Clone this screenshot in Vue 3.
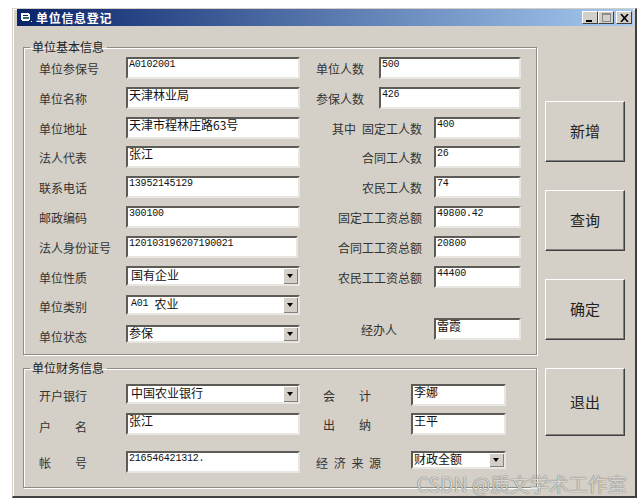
<script setup>
const leftRows = [
  { label: '单位参保号', value: 'A0102001', mono: true },
  { label: '单位名称', value: '天津林业局' },
  { label: '单位地址', value: '天津市程林庄路63号' },
  { label: '法人代表', value: '张江' },
  { label: '联系电话', value: '13952145129', mono: true },
  { label: '邮政编码', value: '300100', mono: true },
  { label: '法人身份证号', value: '120103196207190021', mono: true, cls: 'w172' },
  { label: '单位性质', value: '国有企业', select: true, cls: 'pad h20' },
  { label: '单位类别', prefix: 'A01', value: '农业', select: true, cls: 'pad h20' },
  { label: '单位状态', value: '参保', select: true, cls: 'h18' }
]
const rightRows = [
  { label: '单位人数', value: '500', wide: true },
  { label: '参保人数', value: '426', wide: true },
  { label: '其中\u2002固定工人数', value: '400' },
  { label: '合同工人数', value: '26' },
  { label: '农民工人数', value: '74' },
  { label: '固定工工资总额', value: '49800.42' },
  { label: '合同工工资总额', value: '20800' },
  { label: '农民工工资总额', value: '44400' }
]
const buttons = ['新增', '查询', '确定', '退出']
</script>

<template>
  <div class="window">
    <div class="titlebar">
      <svg class="appicon" width="12" height="10" viewBox="0 0 12 10">
        <path d="M0 0h8v1h1v6h-1v1H1V7H0z" fill="#fff" />
        <path d="M2 2h5v1H2z" fill="#0a246a" />
        <path d="M2 4h6v2H2z" fill="#2f6f6a" />
        <path d="M10 8h1v1h-1z" fill="#fff" />
      </svg>
      <span class="title">单位信息登记</span>
      <div class="caps">
        <span class="cap"><i class="min"></i></span>
        <span class="cap"><i class="max"></i></span>
        <span class="cap close">
          <svg width="9" height="8" viewBox="0 0 9 8"><path d="M1 0l7 8M8 0L1 8" stroke="#000" stroke-width="1.6" fill="none" /></svg>
        </span>
      </div>
    </div>

    <div class="body">
      <div class="groups">
        <fieldset class="group g1">
          <legend>单位基本信息</legend>
          <div class="cols">
            <div class="col left">
              <div v-for="r in leftRows" :key="r.label" class="row">
                <label class="lbl lw">{{ r.label }}</label>
                <div class="field w173" :class="[r.cls, { mono: r.mono }]">
                  <span v-if="r.prefix" class="asc">{{ r.prefix }}</span>
                  <span>{{ r.value }}</span>
                  <b v-if="r.select" class="arrow"></b>
                </div>
              </div>
            </div>
            <div class="col right">
              <div v-for="r in rightRows" :key="r.label" class="row rr">
                <label class="lbl end" :class="{ endw: r.wide }">{{ r.label }}</label>
                <div class="field mono" :class="r.wide ? 'w142' : 'w87'"><span>{{ r.value }}</span></div>
              </div>
              <div class="row rr agent">
                <label class="lbl end agentlbl">经办人</label>
                <div class="field w87"><span>雷霞</span></div>
              </div>
            </div>
          </div>
        </fieldset>

        <fieldset class="group g2">
          <legend>单位财务信息</legend>
          <div class="cols">
            <div class="col left fin">
              <div class="row">
                <label class="lbl lw">开户银行</label>
                <div class="field w173 pad h20"><span>中国农业银行</span><b class="arrow"></b></div>
              </div>
              <div class="row">
                <label class="lbl lw sp low">户<em>名</em></label>
                <div class="field w173"><span>张江</span></div>
              </div>
              <div class="row r3">
                <label class="lbl lw sp">帐<em>号</em></label>
                <div class="field w173 mono"><span>216546421312.</span></div>
              </div>
            </div>
            <div class="col fin finr">
              <div class="row">
                <label class="lbl sp sp2">会<em>计</em></label>
                <div class="field w95"><span>李娜</span></div>
              </div>
              <div class="row">
                <label class="lbl sp sp2">出<em>纳</em></label>
                <div class="field w95"><span>王平</span></div>
              </div>
              <div class="row r3">
                <label class="lbl src">经济来源</label>
                <div class="field w95 h18"><span>财政全额</span><b class="arrow"></b></div>
              </div>
            </div>
          </div>
        </fieldset>
      </div>

      <div class="btns">
        <button v-for="b in buttons" :key="b" class="btn">{{ b }}</button>
      </div>
    </div>
    <span class="wm">CSDN @质文学术工作室</span>
  </div>
</template>

<style>
body { background: #fff; margin: 0; }
</style>

<style scoped>
.window {
  position: relative;
  box-sizing: border-box;
  width: 625px;
  height: 490px;
  margin: 8px 0 0 12px;
  background: #d4d0c8;
  border-left: 1px solid #d4d0c8;
  border-top: 1px solid #d4d0c8;
  border-right: 2px solid #404040;
  border-bottom: 2px solid #404040;
  box-shadow: inset 1px 1px 0 #fff;
  padding: 0 2px;
  font-family: "Noto Sans CJK SC", "Liberation Sans", sans-serif;
  font-size: 12px;
  color: #222;
  overflow: hidden;
}
.titlebar {
  display: flex;
  align-items: center;
  height: 17px;
  margin: 0 0 0 2px;
  background: linear-gradient(90deg, #0a246a, #a6caf0);
  color: #fff;
}
.appicon { margin: 0 3px 0 4px; }
.title { font-size: 12px; font-weight: 700; line-height: 15px; letter-spacing: 0.7px; }
.caps { display: flex; margin-left: auto; margin-right: 1px; }
.cap {
  box-sizing: border-box;
  width: 16px;
  height: 13px;
  background: #d4d0c8;
  border: 1px solid;
  border-color: #fff #404040 #404040 #fff;
  display: flex;
  align-items: center;
  justify-content: center;
  position: relative;
}
.cap.close { margin-left: 2px; }
.min { display: block; width: 6px; height: 2px; background: #000; margin-top: 6px; margin-right: 2px; }
.max { display: block; box-sizing: border-box; width: 9px; height: 9px; border: 1px solid #8a8a8a; border-top-width: 2px; }
.body { display: flex; padding: 0 0 0 8px; }
.groups { width: 515px; padding-top: 13px; }
.group {
  margin: 0;
  padding: 0;
  box-sizing: border-box;
  width: 514px;
  border: 1px solid #8f8c85;
  box-shadow: 1px 1px 0 #fff, inset 1px 1px 0 #fff;
  min-inline-size: 0;
}
.group legend {
  margin-left: 6px;
  padding: 0 3px 0 2px;
  font-size: 12px;
  line-height: 16px;
}
.g1 { height: 316px; }
.g2 { height: 128px; margin-top: 5px; }
.cols { display: flex; }
.col { display: flex; flex-direction: column; }
.left { width: 282px; padding-top: 2px; gap: 7.8px; }
.right { flex: 1; padding-top: 2px; gap: 7.8px; }
.row { display: flex; align-items: flex-start; height: 22px; }
.lbl {
  display: block;
  box-sizing: border-box;
  flex: none;
  font-size: 12px;
  line-height: 22px;
  white-space: nowrap;
  position: relative;
  top: 1px;
  color: #333;
}
.lw { width: 102px; padding-left: 15px; }
.low { top: 3px; }
.field {
  box-sizing: border-box;
  height: 22px;
  background: #fff;
  border: 2px solid;
  border-color: #5d5b56 #e8e6e0 #e8e6e0 #5d5b56;
  display: flex;
  align-items: flex-start;
  position: relative;
  flex: none;
  padding-left: 1px;
  font-size: 12px;
  line-height: 11px;
  color: #111;
}
.mono { font-family: "Liberation Mono", "Noto Sans CJK SC", monospace; font-size: 10px; line-height: 12px; letter-spacing: -0.2px; }
.asc { font-family: "Liberation Mono", monospace; font-size: 10px; letter-spacing: -0.2px; margin-right: 6px; }
.w173 { width: 174px; }
.w172 { width: 172px; }
.w142 { width: 142px; }
.w87 { width: 87px; }
.w95 { width: 95px; }
.h20 { height: 20px; }
.h18 { height: 18px; }
.pad { padding-left: 3px; padding-top: 1px; }
.rr { justify-content: flex-end; width: 215px; }
.end { margin-right: 12px; }
.endw { margin-right: 15px; }
.arrow {
  position: absolute;
  right: 0;
  top: 0;
  bottom: 0;
  width: 15px;
  background: #d4d0c8;
  box-shadow: inset 1px 1px 0 #fff, inset -1px -1px 0 #808080;
}
.arrow::after {
  content: "";
  position: absolute;
  left: 4px;
  top: 50%;
  margin-top: -2px;
  border: 3px solid transparent;
  border-top: 4px solid #000;
  border-bottom: 0;
}
.agent { margin-top: 23px; }
.agentlbl { margin-right: 37px; }
.fin { padding-top: 8px; gap: 7px; }
.r3 { margin-top: 9px; }
.sp em { font-style: normal; margin-left: 24px; }
.finr { flex: 1; }
.sp2 { width: 105px; padding-left: 17px; }
.src { width: 105px; padding-left: 10px; letter-spacing: 5.7px; }
.btns { display: flex; flex-direction: column; padding: 75px 0 0 7px; gap: 28.6px; }
.btn {
  box-sizing: border-box;
  width: 80px;
  height: 60.5px;
  background: #d4d0c8;
  border: 1px solid;
  border-color: #fff #404040 #404040 #fff;
  box-shadow: inset -1px -1px 0 #808080;
  font-family: "Noto Sans CJK SC", sans-serif;
  font-size: 15px;
  color: #222;
  padding: 0 0 2px;
}
.btn:last-child { height: 68px; }
.wm {
  position: absolute;
  right: 8px;
  bottom: 2px;
  font-family: "Noto Sans CJK SC", "Liberation Sans", sans-serif;
  font-size: 19.5px;
  line-height: 20px;
  color: rgba(240,238,232,0.85);
  text-shadow: 0 0 1px #333;
  white-space: nowrap;
}
</style>
